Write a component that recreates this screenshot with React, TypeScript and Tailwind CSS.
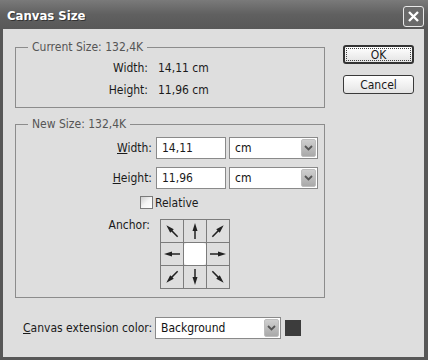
import React from "react";

const F = { fontFamily: '"DejaVu Sans Condensed", "Liberation Sans", Arial, sans-serif' };

function Arrow({ angle }: { angle: number }) {
  return (
    <svg width="22" height="22" viewBox="0 0 22 22">
      <g transform={`rotate(${angle} 11 11)`}>
        <line x1="11" y1="19" x2="11" y2="8" stroke="#222" strokeWidth="1.5" />
        <polygon points="11,3 8.5,11 13.5,11" fill="#222" />
      </g>
    </svg>
  );
}

function DropBtn() {
  return (
    <div className="w-[15px] h-[18px] bg-gradient-to-b from-[#cfcfcf] to-[#a9a9a9] rounded-[2px] flex items-center justify-center border border-[#bdbdbd]">
      <svg width="9" height="6" viewBox="0 0 9 6">
        <path d="M1 1 L4.5 4.5 L8 1" stroke="#555" strokeWidth="1.8" fill="none" />
      </svg>
    </div>
  );
}

function Select({ w, text }: { w: string; text: string }) {
  return (
    <div className={`${w} h-[22px] bg-white border border-[#8a8a8a] flex items-center justify-between pl-[5px] pr-[1px]`}>
      <span className="text-[#111]">{text}</span>
      <DropBtn />
    </div>
  );
}

function Cell({ children, center }: { children?: React.ReactNode; center?: boolean }) {
  return (
    <div className="w-[22px] h-[22px] bg-[#dedede] flex items-center justify-center">
      {center ? <div className="w-[22px] h-[22px] bg-white rounded-[3px]" /> : children}
    </div>
  );
}

export default function App() {
  return (
    <div style={F} className="w-[428px] h-[360px] bg-[#575757] flex flex-col">
      <div className="h-[29px] bg-gradient-to-b from-[#7a7a7a] via-[#606060] to-[#585858] flex items-center justify-between pl-[7px] pr-[4px]">
        <span className="text-white font-bold text-[13px] mt-[2px] [text-shadow:1px_1px_0_#333]">Canvas Size</span>
        <div className="w-[21px] h-[21px] mt-[3px] border border-[#e8e8e8] rounded-[3px] bg-[#6a6a6a] flex items-center justify-center">
          <svg width="13" height="13" viewBox="0 0 13 13">
            <path d="M2 2 L11 11 M11 2 L2 11" stroke="white" strokeWidth="2.4" />
          </svg>
        </div>
      </div>
      <div className="flex-1 ml-[3px] mr-[4px] mb-[3px] bg-[#dedede] text-[#1a1a1a] text-[12px] pt-[16px] pl-[12px]">
        <div className="flex">
          <div className="flex flex-col">
            {/* Current Size */}
            <div className="relative mt-[2px] w-[310px] h-[61px] border border-[#8c8c8c] pt-[12px]">
              <span className="absolute left-[12px] top-[-9px] px-[4px] bg-[#dedede] text-[#555] leading-[16px]">Current Size: 132,4K</span>
              <div className="flex flex-col gap-[6px]">
                <div className="flex h-[16px] items-center">
                  <span className="w-[132px] text-right">Width:</span>
                  <span className="ml-[10px]">14,11 cm</span>
                </div>
                <div className="flex h-[16px] items-center">
                  <span className="w-[132px] text-right">Height:</span>
                  <span className="ml-[10px]">11,96 cm</span>
                </div>
              </div>
            </div>
            {/* New Size */}
            <div className="relative mt-[16px] w-[310px] h-[174px] border border-[#8c8c8c] pt-[12px]">
              <span className="absolute left-[12px] top-[-9px] px-[4px] bg-[#dedede] text-[#555] leading-[16px]">New Size: 132,4K</span>
              <div className="flex items-center h-[22px]">
                <span className="w-[136px] text-right"><span className="underline">W</span>idth:</span>
                <div className="ml-[4px] w-[70px] h-[22px] bg-white border border-[#8a8a8a] flex items-center pl-[5px]">14,11</div>
                <div className="ml-[3px]"><Select w="w-[89px]" text="cm" /></div>
              </div>
              <div className="flex items-center h-[22px] mt-[8px]">
                <span className="w-[136px] text-right"><span className="underline">H</span>eight:</span>
                <div className="ml-[4px] w-[70px] h-[22px] bg-white border border-[#8a8a8a] flex items-center pl-[5px]">11,96</div>
                <div className="ml-[3px]"><Select w="w-[89px]" text="cm" /></div>
              </div>
              <div className="flex items-center mt-[7px] ml-[124px] h-[13px]">
                <div className="w-[13px] h-[13px] border border-[#7a7a7a] bg-gradient-to-br from-[#cfcfcf] via-[#f4f4f4] to-white" />
                <span className="ml-[2px]">Relative</span>
              </div>
              <div className="flex mt-[10px]">
                <span className="w-[134px] text-right mt-[-3px]">Anchor:</span>
                <div className="ml-[10px] grid grid-cols-3 gap-[1px] bg-[#7c7c7c] border border-[#7c7c7c] w-[70px] h-[70px]">
                  <Cell><Arrow angle={-45} /></Cell>
                  <Cell><Arrow angle={0} /></Cell>
                  <Cell><Arrow angle={45} /></Cell>
                  <Cell><Arrow angle={-90} /></Cell>
                  <Cell center />
                  <Cell><Arrow angle={90} /></Cell>
                  <Cell><Arrow angle={-135} /></Cell>
                  <Cell><Arrow angle={180} /></Cell>
                  <Cell><Arrow angle={135} /></Cell>
                </div>
              </div>
            </div>
          </div>
          <div className="ml-[18px] flex flex-col gap-[11px]">
            <div className="w-[71px] h-[19px] border-2 border-[#333] rounded-[3px] bg-gradient-to-b from-white to-[#e4e4e4] p-[1px]">
              <div className="w-full h-full border border-dotted border-[#444] flex items-center justify-center leading-none">OK</div>
            </div>
            <div className="w-[71px] h-[19px] border border-[#3a3a3a] rounded-[3px] bg-gradient-to-b from-white to-[#e4e4e4] flex items-center justify-center leading-none">Cancel</div>
          </div>
        </div>
        <div className="flex items-center mt-[19px] ml-[8px]">
          <span className="w-[132px] whitespace-nowrap"><span className="underline">C</span>anvas extension color:</span>
          <Select w="w-[126px]" text="Background" />
          <div className="ml-[4px] w-[16px] h-[16px] bg-[#3c3c3c]" />
        </div>
      </div>
    </div>
  );
}
